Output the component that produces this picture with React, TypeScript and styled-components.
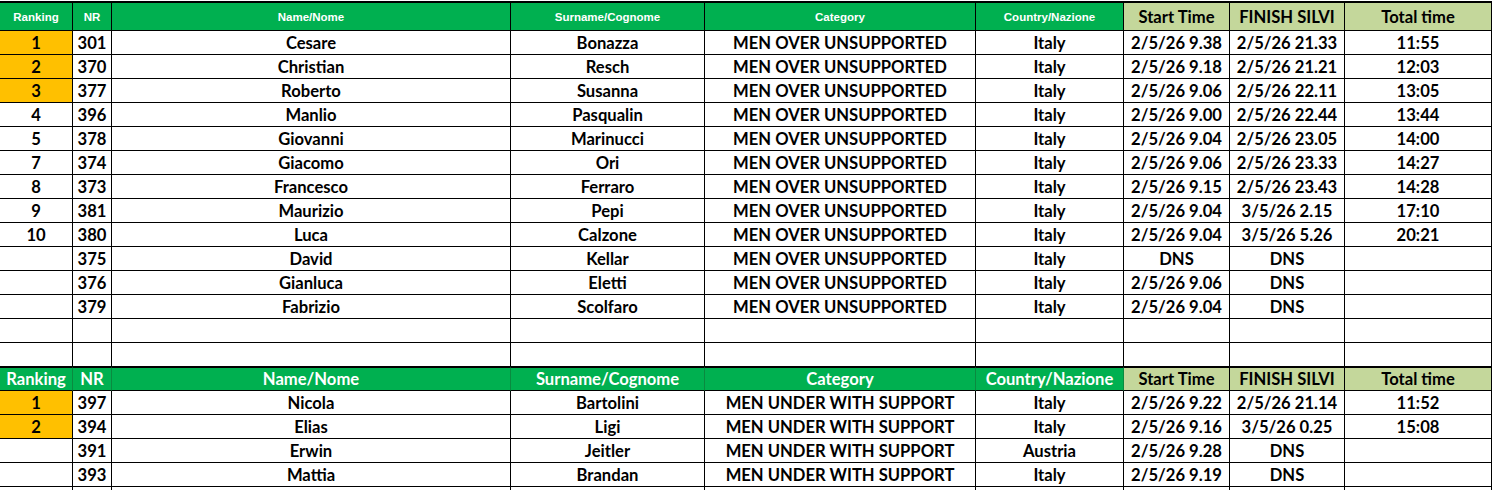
import React from 'react';
import styled, { createGlobalStyle } from 'styled-components';

const GlobalStyle = createGlobalStyle`
  html, body {
    margin: 0;
    background: #ffffff;
  }
  body {
    font-family: "Lato", "Open Sans", "Liberation Sans", sans-serif;
  }
`;

const GREEN = '#00b050';
const OLIVE = '#c4d79b';
const ORANGE = '#ffc000';

// column widths include the 1px right border of each cell
const COLS = [73, 39, 399, 194, 271, 148, 106, 115, 147];

const Page = styled.div`
  padding-top: 1px;
`;

const Sheet = styled.table`
  border-collapse: separate;
  border-spacing: 0;
  table-layout: fixed;
  width: ${COLS.reduce((a, b) => a + b, 0)}px;
`;

const Cell = styled.td<{ $fill?: string }>`
  box-sizing: border-box;
  height: 24px;
  padding: 0;
  border-right: 1px solid #000;
  border-bottom: 1px solid #000;
  background: ${p => p.$fill ?? '#ffffff'};
  color: #000;
  font-size: 16.6px;
  font-weight: 700;
  line-height: 22px;
  text-align: center;
  white-space: nowrap;
  overflow: hidden;
`;

const TopHead = styled.th<{ $olive?: boolean }>`
  box-sizing: border-box;
  height: 30px;
  padding: 0;
  border-top: 2px solid #000;
  border-right: 1px solid #000;
  border-bottom: 1px solid #000;
  background: ${p => (p.$olive ? OLIVE : GREEN)};
  color: ${p => (p.$olive ? '#000' : '#ffffff')};
  font-family: ${p => (p.$olive ? '"Lato", sans-serif' : '"Liberation Sans", Arial, sans-serif')};
  font-size: ${p => (p.$olive ? '16.6px' : '11.5px')};
  font-weight: 700;
  text-align: center;
  white-space: nowrap;
`;

const SubHead = styled.th<{ $olive?: boolean }>`
  box-sizing: border-box;
  height: 24px;
  padding: 0;
  border-top: 1px solid #000;
  border-right: 1px solid ${p => (p.$olive ? '#000' : '#0a8a40')};
  border-bottom: 1px solid #000;
  background: ${p => (p.$olive ? OLIVE : GREEN)};
  color: ${p => (p.$olive ? '#000' : '#ffffff')};
  font-size: 16.6px;
  font-weight: 700;
  text-align: center;
  white-space: nowrap;
`;

type Entry = {
  rank?: number;
  nr: number;
  name: string;
  surname: string;
  country: string;
  start: string;
  finish: string;
  total?: string;
};

const OVER = 'MEN OVER UNSUPPORTED';
const UNDER = 'MEN UNDER WITH SUPPORT';

const overRows: Entry[] = [
  { rank: 1, nr: 301, name: 'Cesare', surname: 'Bonazza', country: 'Italy', start: '2/5/26 9.38', finish: '2/5/26 21.33', total: '11:55' },
  { rank: 2, nr: 370, name: 'Christian', surname: 'Resch', country: 'Italy', start: '2/5/26 9.18', finish: '2/5/26 21.21', total: '12:03' },
  { rank: 3, nr: 377, name: 'Roberto', surname: 'Susanna', country: 'Italy', start: '2/5/26 9.06', finish: '2/5/26 22.11', total: '13:05' },
  { rank: 4, nr: 396, name: 'Manlio', surname: 'Pasqualin', country: 'Italy', start: '2/5/26 9.00', finish: '2/5/26 22.44', total: '13:44' },
  { rank: 5, nr: 378, name: 'Giovanni', surname: 'Marinucci', country: 'Italy', start: '2/5/26 9.04', finish: '2/5/26 23.05', total: '14:00' },
  { rank: 7, nr: 374, name: 'Giacomo', surname: 'Ori', country: 'Italy', start: '2/5/26 9.06', finish: '2/5/26 23.33', total: '14:27' },
  { rank: 8, nr: 373, name: 'Francesco', surname: 'Ferraro', country: 'Italy', start: '2/5/26 9.15', finish: '2/5/26 23.43', total: '14:28' },
  { rank: 9, nr: 381, name: 'Maurizio', surname: 'Pepi', country: 'Italy', start: '2/5/26 9.04', finish: '3/5/26 2.15', total: '17:10' },
  { rank: 10, nr: 380, name: 'Luca', surname: 'Calzone', country: 'Italy', start: '2/5/26 9.04', finish: '3/5/26 5.26', total: '20:21' },
  { nr: 375, name: 'David', surname: 'Kellar', country: 'Italy', start: 'DNS', finish: 'DNS' },
  { nr: 376, name: 'Gianluca', surname: 'Eletti', country: 'Italy', start: '2/5/26 9.06', finish: 'DNS' },
  { nr: 379, name: 'Fabrizio', surname: 'Scolfaro', country: 'Italy', start: '2/5/26 9.04', finish: 'DNS' },
];

const underRows: Entry[] = [
  { rank: 1, nr: 397, name: 'Nicola', surname: 'Bartolini', country: 'Italy', start: '2/5/26 9.22', finish: '2/5/26 21.14', total: '11:52' },
  { rank: 2, nr: 394, name: 'Elias', surname: 'Ligi', country: 'Italy', start: '2/5/26 9.16', finish: '3/5/26 0.25', total: '15:08' },
  { nr: 391, name: 'Erwin', surname: 'Jeitler', country: 'Austria', start: '2/5/26 9.28', finish: 'DNS' },
  { nr: 393, name: 'Mattia', surname: 'Brandan', country: 'Italy', start: '2/5/26 9.19', finish: 'DNS' },
];

const headers = ['Ranking', 'NR', 'Name/Nome', 'Surname/Cognome', 'Category', 'Country/Nazione'];
const timeHeaders = ['Start Time', 'FINISH SILVI', 'Total time'];

function ResultRow({ row, category, podium }: { row: Entry; category: string; podium: number }) {
  const onPodium = row.rank !== undefined && row.rank <= podium;
  return (
    <tr>
      <Cell $fill={onPodium ? ORANGE : undefined}>{row.rank ?? ''}</Cell>
      <Cell>{row.nr}</Cell>
      <Cell>{row.name}</Cell>
      <Cell>{row.surname}</Cell>
      <Cell>{category}</Cell>
      <Cell>{row.country}</Cell>
      <Cell>{row.start}</Cell>
      <Cell>{row.finish}</Cell>
      <Cell>{row.total ?? ''}</Cell>
    </tr>
  );
}

function BlankRow() {
  return (
    <tr>
      {COLS.map((_, i) => <Cell key={i} />)}
    </tr>
  );
}

export default function App() {
  return (
    <Page>
      <GlobalStyle />
      <Sheet>
        <colgroup>
          {COLS.map((w, i) => <col key={i} style={{ width: w }} />)}
        </colgroup>
        <thead>
          <tr>
            {headers.map(h => <TopHead key={h}>{h}</TopHead>)}
            {timeHeaders.map(h => <TopHead key={h} $olive>{h}</TopHead>)}
          </tr>
        </thead>
        <tbody>
          {overRows.map(r => <ResultRow key={r.nr} row={r} category={OVER} podium={3} />)}
          <BlankRow />
          <BlankRow />
          <tr>
            {headers.map(h => <SubHead key={h}>{h}</SubHead>)}
            {timeHeaders.map(h => <SubHead key={h} $olive>{h}</SubHead>)}
          </tr>
          {underRows.map(r => <ResultRow key={r.nr} row={r} category={UNDER} podium={2} />)}
          <BlankRow />
        </tbody>
      </Sheet>
    </Page>
  );
}
